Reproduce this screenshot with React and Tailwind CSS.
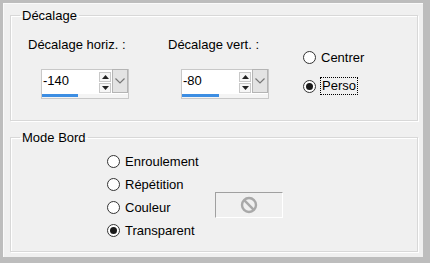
import React from "react";

function Radio({ label, checked, focused }) {
  return (
    <div className="flex items-center h-[18px]">
      <span className="w-[13px] h-[13px] rounded-full border border-[#333] bg-white flex items-center justify-center shrink-0">
        {checked && <span className="w-[7px] h-[7px] rounded-full bg-[#1a1a1a]" />}
      </span>
      <span
        className={
          focused
            ? "ml-[4px] px-[1px] border border-dotted border-black leading-[16px]"
            : "ml-[5px]"
        }
      >
        {label}
      </span>
    </div>
  );
}

function SpinBox({ value, fill }) {
  return (
    <div className="w-[88px] h-[30px] border border-[#c8c8c8] bg-white flex flex-col">
      <div className="flex h-[24px]">
        <div className="flex-1 pl-[1px] pt-[3px] text-black">{value}</div>
        <div className="w-[12px] flex flex-col justify-center gap-[1px] mr-[1px]">
          <div className="h-[10px] border border-[#c8c8c8] bg-[#f6f6f6] flex items-center justify-center">
            <svg width="7" height="4" viewBox="0 0 7 4">
              <path d="M0 4 L3.5 0 L7 4 Z" fill="#222" />
            </svg>
          </div>
          <div className="h-[10px] border border-[#c8c8c8] bg-[#f6f6f6] flex items-center justify-center">
            <svg width="7" height="4" viewBox="0 0 7 4">
              <path d="M0 0 L3.5 4 L7 0 Z" fill="#222" />
            </svg>
          </div>
        </div>
        <div className="w-[16px] h-[24px] -mt-[1px] border border-[#b4b4b4] bg-[#e3e3e3] flex items-center justify-center">
          <svg width="10" height="6" viewBox="0 0 10 6">
            <path d="M0.5 0.5 L5 5 L9.5 0.5" fill="none" stroke="#777" strokeWidth="1.2" />
          </svg>
        </div>
      </div>
      <div className="h-[4px] mt-[0px] bg-[#f4f4f4]">
        <div className="h-[3px] bg-[#3d8ee3]" style={{ width: fill }} />
      </div>
    </div>
  );
}

export default function App() {
  const groupBox =
    "border border-[#d8d8d8] shadow-[inset_1px_1px_0_#fff,1px_1px_0_#fff] ml-[7px] mr-[5px]";
  return (
    <div
      className="w-[430px] h-[263px] bg-[#bdbdbd] pt-[3px] pl-[3px] pr-[7px] pb-[6px] text-[13px] leading-[15px] text-black"
      style={{ fontFamily: "'Liberation Sans', Arial, sans-serif" }}
    >
      <div className="w-full h-full bg-[#f0f0f0] pt-[5px] shadow-[inset_1px_1px_0_#fafafa]">
        <fieldset className={groupBox + " h-[113px]"}>
          <legend className="ml-[9px] px-[2px]">Décalage</legend>
          <div className="flex pl-[17px] pt-[14px]">
            <div className="w-[140px]">
              <div>Décalage horiz. :</div>
              <div className="ml-[13px] mt-[17px]">
                <SpinBox value="-140" fill="36px" />
              </div>
            </div>
            <div className="w-[135px]">
              <div>Décalage vert. :</div>
              <div className="ml-[13px] mt-[17px]">
                <SpinBox value="-80" fill="37px" />
              </div>
            </div>
            <div className="mt-[11px] flex flex-col gap-[11px]">
              <Radio label="Centrer" />
              <Radio label="Perso" checked focused />
            </div>
          </div>
        </fieldset>
        <fieldset className={groupBox + " h-[122px] mt-[9px]"}>
          <legend className="ml-[9px] px-[2px]">Mode Bord</legend>
          <div className="pl-[96px] pt-[7px] flex flex-col gap-[5px]">
            <Radio label="Enroulement" />
            <Radio label="Répétition" />
            <div className="flex items-center h-[18px]">
              <Radio label="Couleur" />
              <div className="ml-[44px] -mt-[5px] w-[68px] h-[26px] border border-t-[#a0a0a0] border-l-[#a0a0a0] border-r-white border-b-white bg-[#f0f0f0] flex items-center justify-center">
                <svg width="18" height="18" viewBox="0 0 18 18">
                  <circle cx="9" cy="9" r="7" fill="none" stroke="#a9a9a9" strokeWidth="2.4" />
                  <path d="M4.2 4.2 L13.8 13.8" stroke="#a9a9a9" strokeWidth="2.4" />
                </svg>
              </div>
            </div>
            <Radio label="Transparent" checked />
          </div>
        </fieldset>
      </div>
    </div>
  );
}
